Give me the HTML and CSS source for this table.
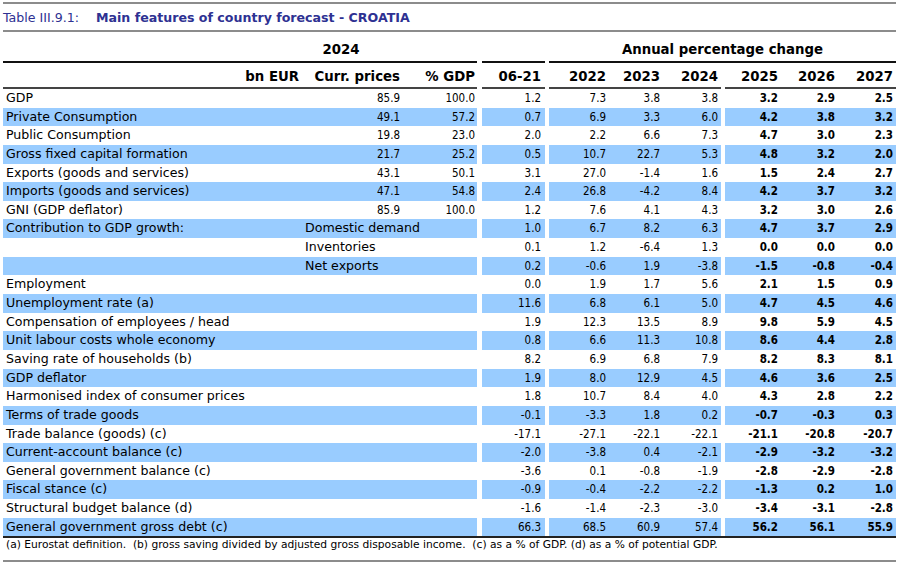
FILE: index.html
```html
<!DOCTYPE html>
<html lang="en">
<head>
<meta charset="utf-8">
<title>Main features of country forecast - CROATIA</title>
<link rel="stylesheet" href="styles.css">
</head>
<body>
<div class="page">
  <div class="title"><span class="tno">Table III.9.1:</span><span class="tname">Main features of country forecast - CROATIA</span></div>

  <div class="row hdr1">
    <div class="lab"><span class="y2024">2024</span></div>
    <div class="g1"></div>
    <div class="g23">Annual percentage change</div>
  </div>

  <div class="row hdr2">
    <div class="lab"><span class="c1">bn EUR</span><span class="c2">Curr. prices</span><span class="c3">% GDP</span></div>
    <div class="g1"><span>06-21</span></div>
    <div class="g2"><span>2022</span><span>2023</span><span>2024</span></div>
    <div class="g3"><span>2025</span><span>2026</span><span>2027</span></div>
  </div>

  <div class="body">
    <div class="row d"><div class="lab"><span class="nm">GDP</span><span class="c2">85.9</span><span class="c3">100.0</span></div><div class="g1"><span>1.2</span></div><div class="g2"><span>7.3</span><span>3.8</span><span>3.8</span></div><div class="g3"><span>3.2</span><span>2.9</span><span>2.5</span></div></div>
    <div class="row d"><div class="lab"><span class="nm">Private Consumption</span><span class="c2">49.1</span><span class="c3">57.2</span></div><div class="g1"><span>0.7</span></div><div class="g2"><span>6.9</span><span>3.3</span><span>6.0</span></div><div class="g3"><span>4.2</span><span>3.8</span><span>3.2</span></div></div>
    <div class="row d"><div class="lab"><span class="nm">Public Consumption</span><span class="c2">19.8</span><span class="c3">23.0</span></div><div class="g1"><span>2.0</span></div><div class="g2"><span>2.2</span><span>6.6</span><span>7.3</span></div><div class="g3"><span>4.7</span><span>3.0</span><span>2.3</span></div></div>
    <div class="row d"><div class="lab"><span class="nm">Gross fixed capital formation</span><span class="c2">21.7</span><span class="c3">25.2</span></div><div class="g1"><span>0.5</span></div><div class="g2"><span>10.7</span><span>22.7</span><span>5.3</span></div><div class="g3"><span>4.8</span><span>3.2</span><span>2.0</span></div></div>
    <div class="row d"><div class="lab"><span class="nm">Exports (goods and services)</span><span class="c2">43.1</span><span class="c3">50.1</span></div><div class="g1"><span>3.1</span></div><div class="g2"><span>27.0</span><span>-1.4</span><span>1.6</span></div><div class="g3"><span>1.5</span><span>2.4</span><span>2.7</span></div></div>
    <div class="row d"><div class="lab"><span class="nm">Imports (goods and services)</span><span class="c2">47.1</span><span class="c3">54.8</span></div><div class="g1"><span>2.4</span></div><div class="g2"><span>26.8</span><span>-4.2</span><span>8.4</span></div><div class="g3"><span>4.2</span><span>3.7</span><span>3.2</span></div></div>
    <div class="row d"><div class="lab"><span class="nm">GNI (GDP deflator)</span><span class="c2">85.9</span><span class="c3">100.0</span></div><div class="g1"><span>1.2</span></div><div class="g2"><span>7.6</span><span>4.1</span><span>4.3</span></div><div class="g3"><span>3.2</span><span>3.0</span><span>2.6</span></div></div>
    <div class="row d"><div class="lab"><span class="nm">Contribution to GDP growth:</span><span class="sub">Domestic demand</span></div><div class="g1"><span>1.0</span></div><div class="g2"><span>6.7</span><span>8.2</span><span>6.3</span></div><div class="g3"><span>4.7</span><span>3.7</span><span>2.9</span></div></div>
    <div class="row d"><div class="lab"><span class="nm"></span><span class="sub">Inventories</span></div><div class="g1"><span>0.1</span></div><div class="g2"><span>1.2</span><span>-6.4</span><span>1.3</span></div><div class="g3"><span>0.0</span><span>0.0</span><span>0.0</span></div></div>
    <div class="row d"><div class="lab"><span class="nm"></span><span class="sub">Net exports</span></div><div class="g1"><span>0.2</span></div><div class="g2"><span>-0.6</span><span>1.9</span><span>-3.8</span></div><div class="g3"><span>-1.5</span><span>-0.8</span><span>-0.4</span></div></div>
    <div class="row d"><div class="lab"><span class="nm">Employment</span></div><div class="g1"><span>0.0</span></div><div class="g2"><span>1.9</span><span>1.7</span><span>5.6</span></div><div class="g3"><span>2.1</span><span>1.5</span><span>0.9</span></div></div>
    <div class="row d"><div class="lab"><span class="nm">Unemployment rate (a)</span></div><div class="g1"><span>11.6</span></div><div class="g2"><span>6.8</span><span>6.1</span><span>5.0</span></div><div class="g3"><span>4.7</span><span>4.5</span><span>4.6</span></div></div>
    <div class="row d"><div class="lab"><span class="nm">Compensation of employees / head</span></div><div class="g1"><span>1.9</span></div><div class="g2"><span>12.3</span><span>13.5</span><span>8.9</span></div><div class="g3"><span>9.8</span><span>5.9</span><span>4.5</span></div></div>
    <div class="row d"><div class="lab"><span class="nm">Unit labour costs whole economy</span></div><div class="g1"><span>0.8</span></div><div class="g2"><span>6.6</span><span>11.3</span><span>10.8</span></div><div class="g3"><span>8.6</span><span>4.4</span><span>2.8</span></div></div>
    <div class="row d"><div class="lab"><span class="nm">Saving rate of households (b)</span></div><div class="g1"><span>8.2</span></div><div class="g2"><span>6.9</span><span>6.8</span><span>7.9</span></div><div class="g3"><span>8.2</span><span>8.3</span><span>8.1</span></div></div>
    <div class="row d"><div class="lab"><span class="nm">GDP deflator</span></div><div class="g1"><span>1.9</span></div><div class="g2"><span>8.0</span><span>12.9</span><span>4.5</span></div><div class="g3"><span>4.6</span><span>3.6</span><span>2.5</span></div></div>
    <div class="row d"><div class="lab"><span class="nm">Harmonised index of consumer prices</span></div><div class="g1"><span>1.8</span></div><div class="g2"><span>10.7</span><span>8.4</span><span>4.0</span></div><div class="g3"><span>4.3</span><span>2.8</span><span>2.2</span></div></div>
    <div class="row d"><div class="lab"><span class="nm">Terms of trade goods</span></div><div class="g1"><span>-0.1</span></div><div class="g2"><span>-3.3</span><span>1.8</span><span>0.2</span></div><div class="g3"><span>-0.7</span><span>-0.3</span><span>0.3</span></div></div>
    <div class="row d"><div class="lab"><span class="nm">Trade balance (goods) (c)</span></div><div class="g1"><span>-17.1</span></div><div class="g2"><span>-27.1</span><span>-22.1</span><span>-22.1</span></div><div class="g3"><span>-21.1</span><span>-20.8</span><span>-20.7</span></div></div>
    <div class="row d"><div class="lab"><span class="nm">Current-account balance (c)</span></div><div class="g1"><span>-2.0</span></div><div class="g2"><span>-3.8</span><span>0.4</span><span>-2.1</span></div><div class="g3"><span>-2.9</span><span>-3.2</span><span>-3.2</span></div></div>
    <div class="row d"><div class="lab"><span class="nm">General government balance (c)</span></div><div class="g1"><span>-3.6</span></div><div class="g2"><span>0.1</span><span>-0.8</span><span>-1.9</span></div><div class="g3"><span>-2.8</span><span>-2.9</span><span>-2.8</span></div></div>
    <div class="row d"><div class="lab"><span class="nm">Fiscal stance (c)</span></div><div class="g1"><span>-0.9</span></div><div class="g2"><span>-0.4</span><span>-2.2</span><span>-2.2</span></div><div class="g3"><span>-1.3</span><span>0.2</span><span>1.0</span></div></div>
    <div class="row d"><div class="lab"><span class="nm">Structural budget balance (d)</span></div><div class="g1"><span>-1.6</span></div><div class="g2"><span>-1.4</span><span>-2.3</span><span>-3.0</span></div><div class="g3"><span>-3.4</span><span>-3.1</span><span>-2.8</span></div></div>
    <div class="row d"><div class="lab"><span class="nm">General government gross debt (c)</span></div><div class="g1"><span>66.3</span></div><div class="g2"><span>68.5</span><span>60.9</span><span>57.4</span></div><div class="g3"><span>56.2</span><span>56.1</span><span>55.9</span></div></div>
  </div>

  <div class="foot">(a) Eurostat definition.  (b) gross saving divided by adjusted gross disposable income.  (c) as a % of GDP. (d) as a % of potential GDP.</div>
</div>
</body>
</html>
```

FILE: styles.css
```css
* { box-sizing: border-box; }

body {
  margin: 0;
  background: #ffffff;
  color: #000000;
  font-family: "DejaVu Sans", "Liberation Sans", sans-serif;
}

.page {
  width: 904px;
  padding: 2px 8px 0 3px;
}

.title {
  height: 30px;
  border-top: 2px solid #8c8c8c;
  border-bottom: 2px solid #8c8c8c;
  display: flex;
  align-items: center;
  color: #2e3192;
  font-size: 12.6px;
}

.tno {
  width: 93px;
  flex: none;
}

.tname {
  font-weight: bold;
}

.row {
  display: flex;
}

.lab {
  width: 474px;
  flex: none;
  display: grid;
  grid-template-columns: 299px 100px 75px;
}

.g1 {
  width: 63px;
  margin-left: 5px;
  flex: none;
  display: grid;
  grid-template-columns: 63px;
}

.g2 {
  width: 172px;
  margin-left: 4px;
  flex: none;
  display: grid;
  grid-template-columns: 59px 54px 59px;
}

.g3 {
  width: 171px;
  margin-left: 4px;
  flex: none;
  display: grid;
  grid-template-columns: 55px 57px 59px;
}

.g23 {
  width: 347px;
  margin-left: 4px;
  flex: none;
}

/* header rows */
.hdr1 {
  height: 31px;
  font-weight: bold;
  font-size: 13.3px;
  line-height: 18px;
}

.hdr1 .lab,
.hdr1 .g1,
.hdr1 .g23 {
  border-bottom: 2px solid #111111;
  padding-top: 9px;
  display: block;
}

.y2024 {
  display: block;
  margin-left: 202px;
  width: 272px;
  text-align: center;
}

.hdr1 .g23 {
  text-align: center;
}

.hdr2 {
  height: 26px;
  font-weight: bold;
  font-size: 13.3px;
  line-height: 18px;
}

.hdr2 .lab,
.hdr2 .g1,
.hdr2 .g2,
.hdr2 .g3 {
  border-bottom: 2px solid #444444;
  padding-top: 5px;
}

.hdr2 span,
.d span {
  text-align: right;
  padding-right: 2px;
  white-space: nowrap;
}

.hdr2 .c1 {
  padding-right: 3px;
}

.g2 span:last-child,
.g3 span:last-child {
  padding-right: 3px;
}

.g1 span {
  padding-right: 4px !important;
}

/* data rows */
.body {
  border-bottom: 2px solid #222222;
}

.d {
  height: 18.65px;
  line-height: 18.65px;
  font-family: "DejaVu Sans Condensed", "DejaVu Sans", sans-serif;
  font-size: 11.5px;
}

.d:nth-child(even) .lab,
.d:nth-child(even) .g1,
.d:nth-child(even) .g2,
.d:nth-child(even) .g3 {
  background: #99ccff;
}

.d .nm,
.d .sub {
  text-align: left;
  padding-left: 3px;
  font-family: "DejaVu Sans", sans-serif;
  font-size: 12.6px;
}

.d .sub {
  grid-column: 2 / 4;
}

.d .g3 {
  font-weight: bold;
}

.foot {
  height: 24px;
  border-bottom: 2px solid #8c8c8c;
  font-family: "DejaVu Sans", sans-serif;
  font-size: 10.7px;
  line-height: 14px;
  padding-left: 3px;
  white-space: pre;
}
```
